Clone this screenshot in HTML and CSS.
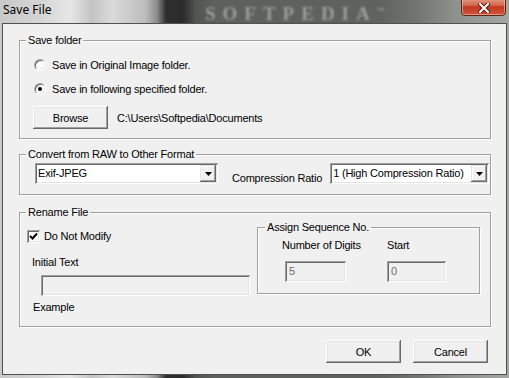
FILE: index.html
```html
<!DOCTYPE html>
<html lang="en">
<head>
  <meta charset="UTF-8">
  <title>Save File</title>
  <link rel="stylesheet" href="styles.css">
</head>
<body>
  <div class="window">
    <div class="titlebar">
      <span class="title">Save File</span>
      <span class="watermark">SOFTPEDIA<sup>™</sup></span>
      <button class="close" aria-label="Close">
        <svg width="12" height="10" viewBox="0 0 12 10">
          <path d="M2 1 L10 9 M10 1 L2 9" stroke="#4a1a14" stroke-width="4" stroke-linecap="square"/>
          <path d="M2 1 L10 9 M10 1 L2 9" stroke="#fff" stroke-width="2" stroke-linecap="square"/>
        </svg>
      </button>
    </div>

    <div class="client">
      <!-- Carpeta de destino -->
      <fieldset class="group">
        <legend>Save folder</legend>
        <div class="folder-body">
          <div class="option"><span class="radio"></span>Save in Original Image folder.</div>
          <div class="option"><span class="radio checked"></span>Save in following specified folder.</div>
          <div class="browse-row">
            <button class="btn btn-browse">Browse</button>
            <span class="path">C:\Users\Softpedia\Documents</span>
          </div>
        </div>
      </fieldset>

      <!-- Formato -->
      <fieldset class="group group-convert">
        <legend>Convert from RAW to Other Format</legend>
        <div class="convert-body">
          <div class="combo combo-format">
            <span class="combo-text">Exif-JPEG</span>
            <span class="combo-btn"><svg width="7" height="4" viewBox="0 0 7 4"><path d="M0 0 H7 L3.5 4 Z" fill="#000"/></svg></span>
          </div>
          <span class="ratio-label">Compression Ratio</span>
          <div class="combo combo-ratio">
            <span class="combo-text">1 (High Compression Ratio)</span>
            <span class="combo-btn"><svg width="7" height="4" viewBox="0 0 7 4"><path d="M0 0 H7 L3.5 4 Z" fill="#000"/></svg></span>
          </div>
        </div>
      </fieldset>

      <!-- Renombrar -->
      <fieldset class="group group-rename">
        <legend>Rename File</legend>
        <div class="rename-body">
          <div class="rename-left">
            <div class="check-row">
              <span class="checkbox"><svg width="9" height="9" viewBox="0 0 9 9"><path d="M1 4 L3.5 6.5 L8 1.5" stroke="#000" stroke-width="2" fill="none"/></svg></span>
              Do Not Modify
            </div>
            <div class="field-label">Initial Text</div>
            <div class="textbox textbox-initial"></div>
            <div class="example-label">Example</div>
          </div>

          <fieldset class="group group-seq">
            <legend>Assign Sequence No.</legend>
            <div class="seq-body">
              <span>Number of Digits</span>
              <span>Start</span>
              <div class="textbox disabled seq-digits">5</div>
              <div class="textbox disabled seq-start">0</div>
            </div>
          </fieldset>
        </div>
      </fieldset>

      <div class="actions">
        <button class="btn">OK</button>
        <button class="btn">Cancel</button>
      </div>
    </div>
  </div>
</body>
</html>
```

FILE: styles.css
```css
html, body {
  margin: 0;
  padding: 0;
}

body {
  width: 509px;
  height: 378px;
  overflow: hidden;
  font-family: "Liberation Sans", Arial, sans-serif;
  font-size: 11px;
  letter-spacing: -0.2px;
  color: #000;
}

.window {
  height: 378px;
  box-sizing: border-box;
  padding: 0 2px 3px 2px;
  display: flex;
  flex-direction: column;
  background: linear-gradient(90deg, #c9c9c9 0, #d4d4d4 40px, #e6e6e6 70px, #c4c4c4 92px, #dadada 112px, #bdbdbd 145px, #8c8c8c 157px, #2e2e2e 166px, #2b2b2b 183px, #525552 196px, #5d605b 215px, #5f625d 380px, #747873 420px, #8d918b 455px, #a4a8a3 509px);
}

/* Barra de título */
.titlebar {
  position: relative;
  height: 23px;
  flex: none;
}

.title {
  display: block;
  padding-left: 1px;
  line-height: 20px;
  font-family: "Noto Sans", "Open Sans", sans-serif;
  font-size: 12px;
  letter-spacing: 0;
}

.watermark {
  position: absolute;
  left: 203px;
  top: 0;
  font-family: "Liberation Serif", serif;
  font-size: 19px;
  font-weight: bold;
  line-height: 22px;
  letter-spacing: 7px;
  color: #9c9e9a;
  filter: blur(1.2px);
}

.watermark sup {
  font-size: 8px;
  letter-spacing: 0;
}

.close {
  position: absolute;
  right: 1px;
  top: -4px;
  width: 45px;
  height: 20px;
  padding: 4px 0 0;
  border: 1px solid #5a2418;
  border-radius: 0 0 4px 4px;
  background: linear-gradient(#e6a792 0, #d2694f 45%, #c0391f 55%, #d0553a 100%);
  box-shadow: inset 0 0 0 1px rgba(255, 220, 200, 0.5);
  display: flex;
  justify-content: center;
  align-items: center;
}

/* Área cliente */
.client {
  flex: 1;
  background-color: #f0f0f0;
  border: 1px solid #505050;
  padding: 10px 15px 0 16px;
  display: flex;
  flex-direction: column;
}

.group {
  margin: 0;
  padding: 0;
  min-width: 0;
  border: 1px solid #a0a0a0;
  box-shadow: inset 1px 1px #fff, 1px 1px #fff;
}

.group legend {
  margin-left: 6px;
  padding: 0 2px;
  line-height: 13px;
}

.folder-body {
  padding: 10px 14px 9px 14px;
}

.option {
  display: flex;
  align-items: center;
  gap: 6px;
  height: 16px;
}

.option + .option {
  margin-top: 8px;
}

.radio {
  width: 12px;
  height: 12px;
  box-sizing: border-box;
  border-radius: 50%;
  border: 1px solid;
  border-color: #a0a0a0 #fff #fff #a0a0a0;
  box-shadow: inset 1px 1px #696969, inset -1px -1px #e3e3e3;
  background: #fff;
  display: flex;
  align-items: center;
  justify-content: center;
}

.radio.checked::after {
  content: "";
  width: 4px;
  height: 4px;
  border-radius: 50%;
  background: #000;
}

.browse-row {
  display: flex;
  align-items: center;
  gap: 9px;
  margin-top: 9px;
}

.btn {
  width: 75px;
  height: 23px;
  padding: 0;
  border: none;
  background: #f0f0f0;
  font: inherit;
  letter-spacing: inherit;
  color: #000;
  box-shadow: inset -1px -1px #696969, inset 1px 1px #fff, inset -2px -2px #a0a0a0, inset 2px 2px #e3e3e3;
}

.btn-browse {
  margin-left: -1px;
}

/* Formato */
.group-convert {
  margin-top: 9px;
}

.convert-body {
  display: flex;
  align-items: flex-end;
  padding: 2px 0 10px 15px;
}

.combo {
  height: 21px;
  box-sizing: border-box;
  padding: 2px;
  display: flex;
  background: #fff;
  box-shadow: inset 1px 1px #a0a0a0, inset -1px -1px #fff, inset 2px 2px #696969, inset -2px -2px #e3e3e3;
}

.combo-format {
  width: 183px;
}

.combo-ratio {
  width: 159px;
  margin-left: 8px;
}

.combo-text {
  flex: 1;
  padding-left: 1px;
  line-height: 17px;
  white-space: nowrap;
  overflow: hidden;
}

.combo-btn {
  width: 16px;
  height: 17px;
  background: #f0f0f0;
  box-shadow: inset -1px -1px #696969, inset 1px 1px #e3e3e3, inset -2px -2px #a0a0a0, inset 2px 2px #fff;
  display: flex;
  align-items: center;
  justify-content: center;
}

.ratio-label {
  margin-left: 14px;
  line-height: 13px;
  margin-bottom: -1px;
}

/* Renombrar */
.group-rename {
  margin-top: 11px;
}

.rename-body {
  display: flex;
  padding: 2px 10px 12px 7px;
}

.rename-left {
  width: 223px;
}

.check-row {
  display: flex;
  align-items: center;
  gap: 4px;
  height: 14px;
  margin-top: 8px;
}

.checkbox {
  width: 13px;
  height: 13px;
  box-sizing: border-box;
  background: #fff;
  box-shadow: inset 1px 1px #a0a0a0, inset -1px -1px #fff, inset 2px 2px #696969, inset -2px -2px #e3e3e3;
  display: flex;
  align-items: center;
  justify-content: center;
}

.field-label {
  margin-top: 13px;
  padding-left: 5px;
  line-height: 13px;
}

.textbox {
  height: 21px;
  box-sizing: border-box;
  padding-left: 4px;
  line-height: 21px;
  background: #fff;
  box-shadow: inset 1px 1px #a0a0a0, inset -1px -1px #fff, inset 2px 2px #696969, inset -2px -2px #e3e3e3;
}

.textbox.disabled {
  background: #f0f0f0;
  color: #6d6d6d;
}

.textbox-initial {
  width: 209px;
  margin: 6px 0 0 14px;
  background: #f0f0f0;
}

.example-label {
  margin-top: 5px;
  padding-left: 6px;
  line-height: 13px;
}

.group-seq {
  width: 223px;
  box-sizing: border-box;
  margin-left: 7px;
  align-self: flex-start;
}

.group-seq legend {
  margin-left: 7px;
}

.seq-body {
  display: grid;
  grid-template-columns: 105px 1fr;
  row-gap: 9px;
  padding: 5px 0 11px 24px;
  line-height: 13px;
}

.seq-digits {
  width: 61px;
  margin-left: 3px;
}

.seq-start {
  width: 59px;
}

.actions {
  display: flex;
  justify-content: flex-end;
  gap: 12px;
  margin: 13px 3px 0 0;
}
```
